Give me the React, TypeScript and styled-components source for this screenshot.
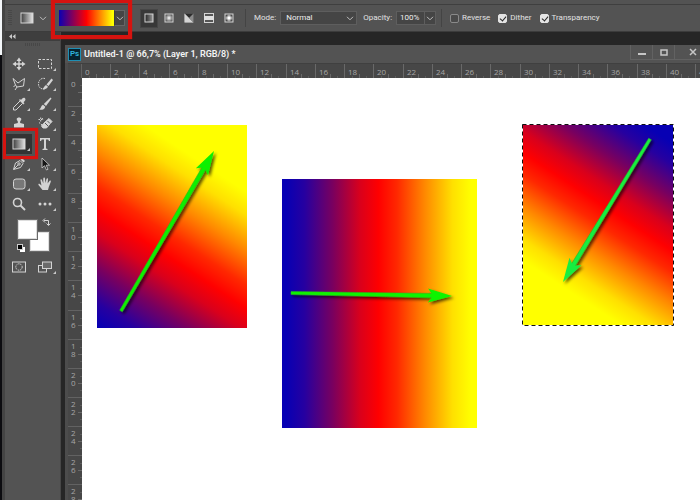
import React from "react";
import styled, { createGlobalStyle, css } from "styled-components";

const GlobalStyle = createGlobalStyle`
  * { box-sizing: border-box; }
  body { margin: 0; background: #262626; }
  button, input, select { font: inherit; color: inherit; margin: 0; padding: 0; border: 0; border-radius: 0; background: none; }
`;

const RAMP = "linear-gradient(90deg, #0a00b4 0%, #ff0000 50%, #ffff00 97%)";

const Shell = styled.div`
  display: flex;
  height: 100vh;
  overflow: hidden;
  color: #e2e2e2;
  font-family: Roboto, "Open Sans", sans-serif;
  font-size: 8px;
  line-height: 12px;
`;

const Backdrop = styled.div`
  flex: none;
  width: 2px;
  background: linear-gradient(#f4f7fa 0 55px, #0c0c10 55px);
`;

const Main = styled.div`
  flex: 1;
  min-width: 0;
  display: flex;
  flex-direction: column;
  border-left: 3px solid #444444;
`;

const MenuEdge = styled.div`
  flex: none;
  height: 5px;
  background: #535353;
  border-bottom: 1px solid #3f3f3f;
`;

const OptionsBar = styled.header`
  flex: none;
  display: flex;
  align-items: center;
  height: 27px;
  padding-left: 3px;
  background: #535353;
  border-bottom: 1px solid #3c3c3c;
`;

const Grip = styled.span`
  flex: none;
  width: 4px;
  height: 16px;
  background: repeating-linear-gradient(#484848 0 1px, #535353 1px 2px);
`;

const Divider = styled.span`
  flex: none;
  width: 1px;
  height: 18px;
  margin: 0 8px 0 5px;
  background: #444444;
`;

const PresetButton = styled.button`
  display: flex;
  align-items: center;
  gap: 5px;
  height: 18px;
  margin-left: 8px;
`;

const Highlighted = styled.div`
  position: relative;
  display: flex;
  align-items: center;
  height: 18px;
  margin: 0 15px 0 12px;

  &::after {
    content: "";
    position: absolute;
    inset: -10px -7px -12px -8px;
    border: 4px solid #d6130f;
    box-shadow: 0 0 1px #d6130f;
    pointer-events: none;
    z-index: 2;
  }
`;

const RampButton = styled.button`
  width: 55px;
  height: 16px;
  background: ${RAMP};
`;

const DropButton = styled.button`
  display: grid;
  place-items: center;
  width: 11px;
  height: 16px;
  border: 1px solid #666666;
  border-left: 1px solid #3c3c3c;
  background: #454545;
`;

const ModeButton = styled.button<{ $active?: boolean }>`
  flex: none;
  display: grid;
  place-items: center;
  width: 18px;
  height: 19px;
  margin-right: 2px;
  ${({ $active }) => $active && css`background: #383838; box-shadow: inset 0 0 0 1px #464646;`}
`;

const FieldLabel = styled.label`
  flex: none;
  margin-right: 4px;
`;

const Field = styled.div<{ $width: number; $after?: number }>`
  flex: none;
  position: relative;
  display: flex;
  align-items: center;
  width: ${({ $width }) => $width}px;
  height: 14px;
  margin-right: ${({ $after = 0 }) => $after}px;
  border: 1px solid #5e5e5e;
  background: #454545;
  color: #eeeeee;

  > svg { position: absolute; right: 2px; top: 4px; pointer-events: none; }
`;

const ModeSelect = styled.select`
  appearance: none;
  width: 100%;
  height: 12px;
  padding-left: 5px;
`;

const OpacityInput = styled.input`
  width: 27px;
  height: 12px;
  padding-left: 3px;
`;

const OpacityDrop = styled.button`
  display: grid;
  place-items: center;
  flex: 1;
  height: 12px;
  border-left: 1px solid #5e5e5e;
`;

const Check = styled.label`
  flex: none;
  display: flex;
  align-items: center;
  gap: 3px;
  margin-right: 8px;
`;

const Box = styled.input`
  appearance: none;
  position: relative;
  width: 9px;
  height: 9px;
  border: 1px solid #8a8a8a;
  border-radius: 2px;
  background: #4a4a4a;

  &:checked { background: #e4e4e4; border-color: #e4e4e4; }
  &:checked::before {
    content: "";
    position: absolute;
    left: 2px;
    top: 0;
    width: 3px;
    height: 5px;
    border: solid #262626;
    border-width: 0 1px 1px 0;
    transform: rotate(40deg);
  }
`;

const Workspace = styled.div`
  flex: 1;
  min-height: 0;
  display: flex;
  background: #262626;
`;

const ToolPanel = styled.aside`
  flex: none;
  width: 56px;
  background: #535353;
  border-right: 1px solid #474747;
`;

const PanelHeader = styled.button`
  display: flex;
  align-items: center;
  width: 100%;
  height: 9px;
  padding-left: 4px;
  background: #3e3e3e;
`;

const PanelGrip = styled.div`
  width: 15px;
  height: 3px;
  margin: 2px 0 8px 20px;
  background: repeating-linear-gradient(90deg, #474747 0 1px, #535353 1px 2px);
`;

const ToolGrid = styled.div`
  display: grid;
  grid-template-columns: repeat(2, 26px);
  grid-auto-rows: 20px;
  padding-left: 1px;
`;

const ToolButton = styled.button<{ $active?: boolean; $plain?: boolean }>`
  position: relative;
  display: grid;
  place-items: center;

  ${({ $plain }) => !$plain && css`
    &::after {
      content: "";
      position: absolute;
      right: 2px;
      bottom: 3px;
      border-left: 3px solid transparent;
      border-bottom: 3px solid #c8c8c8;
    }
  `}

  ${({ $active }) => $active && css`
    background: #333333;
    &::before {
      content: "";
      position: absolute;
      inset: -6px -6px -5px -3px;
      border: 3px solid #d6130f;
      box-shadow: 0 0 1px #d6130f;
      z-index: 2;
    }
  `}
`;

const Swatches = styled.div`
  position: relative;
  height: 43px;
`;

const Swatch = styled.button<{ $back?: boolean }>`
  position: absolute;
  left: ${({ $back }) => ($back ? 25 : 13)}px;
  top: ${({ $back }) => ($back ? 18 : 6)}px;
  width: 19px;
  height: 19px;
  background: #ffffff;
  border: 1px solid #dddddd;
  outline: 1px solid #6a6a6a;
`;

const SwatchAction = styled.button<{ $reset?: boolean }>`
  position: absolute;
  display: grid;
  left: ${({ $reset }) => ($reset ? 12 : 37)}px;
  top: ${({ $reset }) => ($reset ? 30 : 4)}px;
`;

const DocWindow = styled.main`
  flex: 1;
  min-width: 0;
  display: flex;
  flex-direction: column;
  margin: 13px 0 0 4px;
  padding-left: 3px;
  background: #4c4c4c;
`;

const TitleBar = styled.div`
  flex: none;
  display: flex;
  height: 18px;
  margin-left: -3px;
  padding-left: 3px;
  background: #535353;
`;

const DocTitle = styled.h1`
  flex: 1;
  display: flex;
  align-items: center;
  gap: 3px;
  margin: 0;
  font-family: Roboto, "Open Sans", sans-serif;
  font-size: 9px;
  line-height: 20px;
  font-weight: 600;
  color: #f4f4f4;
  white-space: nowrap;
`;

const AppBadge = styled.span`
  flex: none;
  display: grid;
  place-items: center;
  width: 13px;
  height: 13px;
  border: 1px solid #1f8fb4;
  background: #06222f;
  color: #2fb4dc;
  font-size: 8px;
  line-height: 10px;
`;

const WindowButton = styled.button<{ $last?: boolean }>`
  flex: none;
  display: grid;
  place-items: center;
  width: ${({ $last }) => ($last ? 26 : 22)}px;
  height: 15px;
  padding-left: ${({ $last }) => ($last ? 10 : 0)}px;
  border-left: 1px solid #626262;
  border-bottom: 1px solid #626262;
`;

const TopRuler = styled.div`
  flex: none;
  display: flex;
  height: 15px;
  overflow: hidden;
  background: #474747;
  color: #a6a6a6;
  font-family: "Open Sans", sans-serif;
  border-top: 1px solid #404040;
`;

const RulerCorner = styled.span`
  flex: none;
  width: 14px;
  border-right: 1px solid #626262;
`;

const TopCell = styled.span`
  flex: none;
  width: 29px;
  padding: 2px 0 0 3px;
  border-right: 1px solid #696969;
  background:
    linear-gradient(#696969, #696969) 14px 100% / 1px 4px no-repeat,
    linear-gradient(#5c5c5c, #5c5c5c) 7px 100% / 1px 2px no-repeat,
    linear-gradient(#5c5c5c, #5c5c5c) 21px 100% / 1px 2px no-repeat;
  &:nth-child(4n) { width: 30px; }
`;

const DocBody = styled.div`
  flex: 1;
  min-height: 0;
  display: flex;
`;

const SideRuler = styled.div`
  flex: none;
  width: 14px;
  overflow: hidden;
  background: #474747;
  color: #a6a6a6;
  font-family: "Open Sans", sans-serif;
`;

const SideCell = styled.div`
  height: 29px;
  width: 14px;
  padding: 2px 6px 0 3px;
  line-height: 8px;
  word-break: break-all;
  border-bottom: 1px solid #626262;
  background:
    linear-gradient(#696969, #696969) 100% 14px / 4px 1px no-repeat,
    linear-gradient(#5c5c5c, #5c5c5c) 100% 7px / 2px 1px no-repeat,
    linear-gradient(#5c5c5c, #5c5c5c) 100% 21px / 2px 1px no-repeat;
  &:nth-child(8n) { height: 30px; }
`;

const Canvas = styled.section`
  position: relative;
  flex: 1;
  min-width: 0;
  overflow: hidden;
  background: #ffffff;
`;

const Artboard = styled.svg<{ $x: number; $y: number }>`
  position: absolute;
  left: ${({ $x }) => $x}px;
  top: ${({ $y }) => $y}px;
  overflow: visible;
`;

const Chevron = () => (
  <svg width="8" height="5" viewBox="0 0 8 5" fill="none" stroke="#bdbdbd"><path d="M1 .8 4 3.8 7 .8" /></svg>
);

const light = "#d4d4d4";

const GradientIcon = ({ id }: { id: string }) => (
  <svg width="14" height="12" viewBox="0 0 14 12">
    <defs><linearGradient id={id}><stop stopColor="#3d3d3d" /><stop offset="1" stopColor="#e6e6e6" /></linearGradient></defs>
    <rect x="1" y="1" width="12" height="10" fill={`url(#${id})`} stroke={light} />
  </svg>
);

const modeIcons: { name: string; art: React.ReactNode }[] = [
  { name: "Linear gradient", art: <rect x="1" y="1" width="8" height="8" fill="url(#mLin)" stroke={light} /> },
  { name: "Radial gradient", art: <rect x="1" y="1" width="8" height="8" fill="url(#mRad)" stroke={light} /> },
  { name: "Angle gradient", art: <g><rect x=".5" y=".5" width="9" height="9" fill="#8a8a8a" /><path d="M.5.5H9.5V9.5z" fill="#2c2c2c" /><path d="M5 5 .5.5V9.5H9.5z" fill={light} /><path d="M5 5 9.5.5V9.5z" fill="#8a8a8a" /></g> },
  { name: "Reflected gradient", art: <g><rect x=".5" y=".5" width="9" height="9" fill="#555" stroke={light} /><rect x="0" y="3" width="10" height="4" fill="#dedede" /></g> },
  { name: "Diamond gradient", art: <g><rect x="1" y="1" width="8" height="8" fill="#4b4b4b" stroke={light} /><path d="M5 1 9 5 5 9 1 5z" fill="#a8a8a8" /><path d="M5 3 7 5 5 7 3 5z" fill="#fff" /></g> },
];

interface Tool { name: string; art: React.ReactNode; plain?: boolean; active?: boolean }

const tools: Tool[] = [
  { name: "Move", plain: true, art: <path fill={light} stroke="none" d="M8 1.5 10.5 5H8.7V7.3H11V5.5L14.5 8 11 10.5V8.7H8.7V11H10.5L8 14.5 5.5 11H7.3V8.7H5V10.5L1.5 8 5 5.5V7.3H7.3V5H5.5z" /> },
  { name: "Marquee", art: <rect x="1.5" y="3.5" width="13" height="9" strokeDasharray="2.5 1.5" /> },
  { name: "Polygonal lasso", art: <path d="M2 2.5 7 7 13.5 2.5 12.5 10 6 11 4.5 9z M6 11 4 14M4.5 9 2.5 11" /> },
  { name: "Quick selection", art: <g><path d="M8 2.5C4 1.5 1.5 4.5 1.5 8S4 13.5 8 13" strokeDasharray="1.5 1" /><path d="M14.5 2.5 16 4 11.5 10 9.5 8.5z" fill={light} stroke="none" /><path d="M9 9 11 10.8C10 13 8 13.5 5.5 13 7 12 7 10 9 9z" fill={light} stroke="none" /></g> },
  { name: "Eyedropper", art: <g><path d="m9 5-6.5 6.5V14H5l6.5-6.5" /><path d="M8 4 9 3 10 4C11 2.5 12.5 1 14 2.2 15.2 3.5 14 5 12.5 6.2L13.5 7.2 12.3 8.4z" fill={light} stroke="none" /></g> },
  { name: "Brush", art: <g fill={light} stroke="none"><path d="M13.5 1.5 14.5 2.5 9 10 6.8 8z" /><path d="M6 8.7 8.3 10.7C7.5 13.5 5 14.2 2 13.7 4.2 12.5 3.7 9.8 6 8.7z" /></g> },
  { name: "Clone stamp", art: <g fill={light} stroke="none"><path d="M6.8 7C7.5 5 5.5 4.5 5.7 3 6 1 10 1 10.3 3 10.5 4.5 8.5 5 9.2 7L13 8V11.5H3V8z" /><path d="M3 12.7H13V14H3z" /></g> },
  { name: "Eraser", art: <g><path d="M6.5 7.5 12 2.5 15 5.5 9.5 12H6L4.5 10z" fill={light} /><path d="M8 7 11 10M10.5 5 13 7.5" stroke="#555" /><path d="M1.5 3.5H6M3.7 1.5V6M2 6.5 5 9M5 2 6.5 4" strokeDasharray="1.5 1" /></g> },
  { name: "Gradient", active: true, art: <GradientIcon id="toolGradient" /> },
  { name: "Type", art: <path d="M3 2H13V5H12L11.2 3.5H9V12.5L10.5 13V14H5.5V13L7 12.5V3.5H4.8L4 5H3z" fill={light} stroke="none" /> },
  { name: "Pen", art: <g><path d="M2.5 13.5 4.5 7 9 4.5 12 7.5 9.5 11.5z" /><path d="m3 13 4.2-4.2" /><circle cx="8" cy="8" r="1.2" /><path d="M9.5 3.5 11 2 14 5 12.5 6.5z" fill={light} stroke="none" /></g> },
  { name: "Direct selection", art: <path d="M5 2V12L7.5 9.7 9.5 14 11 13.3 9.2 9.2H12.5z" fill="#161616" stroke={light} strokeWidth=".8" /> },
  { name: "Rounded rectangle", art: <rect x="2.5" y="3" width="11.5" height="10" rx="2.5" fill="#777" /> },
  { name: "Hand", art: <path d="M5.5 14 1.5 9C1 7.8 2.2 7.5 3 8.3L4.5 9.5 3.5 4.5C3.3 3 4.7 3 5 4L6.3 7.5 6.3 2.5C6.4 1 7.9 1 8 2.5L8.4 7 9.5 3C9.9 1.7 11.2 2 11 3.3L10.6 7.5 12.4 5C13.3 4 14.3 4.7 13.7 5.9L11.8 11 11 14z" fill={light} stroke="none" /> },
  { name: "Zoom", plain: true, art: <g><circle cx="6.5" cy="6.5" r="4" strokeWidth="1.6" /><path d="M9.5 9.5 14 14" strokeWidth="2" /></g> },
  { name: "Edit toolbar", art: <g fill={light} stroke="none"><circle cx="3" cy="8" r="1.5" /><circle cx="8" cy="8" r="1.5" /><circle cx="13" cy="8" r="1.5" /></g> },
];

const screenTools: Tool[] = [
  { name: "Quick mask", plain: true, art: <g><rect x="1.5" y="3" width="13" height="10" /><circle cx="8" cy="8" r="3.2" strokeDasharray="1.5 .8" /></g> },
  { name: "Screen mode", art: <g><rect x="1.5" y="6.5" width="8" height="6.5" /><rect x="5.5" y="3" width="9" height="6.5" fill="#6a6a6a" /></g> },
];

const ToolSet = ({ items }: { items: Tool[] }) => (
  <ToolGrid>
    {items.map((t) => (
      <ToolButton key={t.name} type="button" aria-label={t.name} $active={t.active} $plain={t.plain}>
        {t.active ? t.art : <svg width="16" height="16" viewBox="0 0 16 16" fill="none" stroke={light}>{t.art}</svg>}
      </ToolButton>
    ))}
  </ToolGrid>
);

type Point = [number, number];
interface PaintedProps {
  id: string; x: number; y: number; w: number; h: number;
  ramp: [Point, Point]; tail: Point; tip: Point; color: string; selected?: boolean;
}

const Painted = ({ id, x, y, w, h, ramp, tail, tip, color, selected }: PaintedProps) => {
  const dx = tip[0] - tail[0];
  const dy = tip[1] - tail[1];
  const length = Math.hypot(dx, dy);
  const angle = (Math.atan2(dy, dx) * 180) / Math.PI;
  return (
    <Artboard $x={x} $y={y} width={w} height={h} viewBox={`0 0 ${w} ${h}`} role="img" aria-label={`Gradient ${id}`}>
      <defs>
        <linearGradient id={`ramp-${id}`} gradientUnits="userSpaceOnUse" x1={ramp[0][0]} y1={ramp[0][1]} x2={ramp[1][0]} y2={ramp[1][1]}>
          <stop offset="0" stopColor="#0700b4" />
          <stop offset=".1" stopColor="#2600a0" />
          <stop offset=".25" stopColor="#780060" />
          <stop offset=".4" stopColor="#d9001c" />
          <stop offset=".5" stopColor="#ff0000" />
          <stop offset=".6" stopColor="#ff2800" />
          <stop offset=".75" stopColor="#ff8800" />
          <stop offset=".9" stopColor="#ffe000" />
          <stop offset="1" stopColor="#ffff00" />
        </linearGradient>
        <filter id={`shade-${id}`} filterUnits="userSpaceOnUse" x="-10" y="-10" width={w + 20} height={h + 20}>
          <feDropShadow dx="2" dy="2" stdDeviation="1.8" floodColor="#000" floodOpacity=".65" />
        </filter>
      </defs>
      <rect width={w} height={h} fill={`url(#ramp-${id})`} />
      {selected && (
        <g fill="none">
          <rect x=".5" y=".5" width={w - 1} height={h - 1} stroke="#fff" />
          <rect x=".5" y=".5" width={w - 1} height={h - 1} stroke="#111" strokeDasharray="4 3" />
        </g>
      )}
      <g filter={`url(#shade-${id})`}>
        <g transform={`translate(${tip[0]} ${tip[1]}) rotate(${angle})`}>
          <path d={`M${-length} -1.5 L-18 -2.2 V2.2 L${-length} 1.5z`} fill={color} stroke="#27b51f" strokeWidth=".5" />
          <path d="M0 0 -24 -7 -19 0 -24 7z" fill={color} />
        </g>
      </g>
    </Artboard>
  );
};

const TOP_MARKS = Array.from({ length: 22 }, (_, i) => i * 2);
const SIDE_MARKS = Array.from({ length: 15 }, (_, i) => i * 2);

export default function App() {
  return (
    <Shell>
      <GlobalStyle />
      <Backdrop />
      <Main>
        <MenuEdge />
        <OptionsBar>
          <Grip />
          <PresetButton type="button" aria-label="Tool preset"><GradientIcon id="presetGradient" /><Chevron /></PresetButton>
          <Highlighted>
            <RampButton type="button" aria-label="Edit gradient" />
            <DropButton type="button" aria-label="Gradient picker"><Chevron /></DropButton>
          </Highlighted>
          <svg width="0" height="0" aria-hidden="true">
            <defs>
              <linearGradient id="mLin"><stop stopColor="#222" /><stop offset="1" stopColor="#999" /></linearGradient>
              <radialGradient id="mRad"><stop stopColor="#fff" /><stop offset="1" stopColor="#555" /></radialGradient>
            </defs>
          </svg>
          {modeIcons.map((m, i) => (
            <ModeButton key={m.name} type="button" aria-label={m.name} $active={i === 0}>
              <svg width="10" height="10" viewBox="0 0 10 10">{m.art}</svg>
            </ModeButton>
          ))}
          <Divider />
          <FieldLabel htmlFor="mode">Mode:</FieldLabel>
          <Field $width={77} $after={6}>
            <ModeSelect id="mode" defaultValue="Normal"><option>Normal</option></ModeSelect>
            <Chevron />
          </Field>
          <FieldLabel htmlFor="opacity">Opacity:</FieldLabel>
          <Field $width={40}>
            <OpacityInput id="opacity" defaultValue="100%" />
            <OpacityDrop type="button" aria-label="Opacity slider"><Chevron /></OpacityDrop>
          </Field>
          <Divider />
          <Check><Box type="checkbox" />Reverse</Check>
          <Check><Box type="checkbox" defaultChecked />Dither</Check>
          <Check><Box type="checkbox" defaultChecked />Transparency</Check>
        </OptionsBar>
        <Workspace>
          <ToolPanel>
            <PanelHeader type="button" aria-label="Collapse tools">
              <svg width="7" height="5" viewBox="0 0 7 5" fill="#c8c8c8"><path d="M3 0V5L0 2.5zM6.5 0V5L3.5 2.5z" /></svg>
            </PanelHeader>
            <PanelGrip />
            <ToolSet items={tools} />
            <Swatches>
              <Swatch $back type="button" aria-label="Background colour" />
              <Swatch type="button" aria-label="Foreground colour" />
              <SwatchAction type="button" aria-label="Swap colours">
                <svg width="9" height="9" viewBox="0 0 9 9" fill="none" stroke={light}><path d="M2 2.5H6.5V7M3 .5 1 2.5 3 4.5M4.5 5.5 6.5 7.5 8.5 5.5" /></svg>
              </SwatchAction>
              <SwatchAction $reset type="button" aria-label="Default colours">
                <svg width="9" height="9" viewBox="0 0 9 9"><rect x="3" y="3" width="5" height="5" fill="#fff" /><rect x=".5" y=".5" width="5" height="5" fill="#000" stroke="#ccc" /></svg>
              </SwatchAction>
            </Swatches>
            <ToolSet items={screenTools} />
          </ToolPanel>
          <DocWindow>
            <TitleBar>
              <DocTitle><AppBadge>Ps</AppBadge>Untitled-1 @ 66,7% (Layer 1, RGB/8) *</DocTitle>
              <WindowButton type="button" aria-label="Minimize"><svg width="8" height="8"><rect y="5" width="8" height="2" fill="#c6c6c6" /></svg></WindowButton>
              <WindowButton type="button" aria-label="Maximize"><svg width="8" height="8"><rect x="1" y="2" width="6" height="5" fill="none" stroke="#c6c6c6" strokeWidth="1.5" /></svg></WindowButton>
              <WindowButton $last type="button" aria-label="Close"><svg width="8" height="8"><path d="M1 1 7 7M7 1 1 7" stroke="#c6c6c6" strokeWidth="1.5" /></svg></WindowButton>
            </TitleBar>
            <TopRuler>
              <RulerCorner />
              {TOP_MARKS.map((n) => <TopCell key={n}>{n}</TopCell>)}
            </TopRuler>
            <DocBody>
              <SideRuler>{SIDE_MARKS.map((n) => <SideCell key={n}>{n}</SideCell>)}</SideRuler>
              <Canvas>
                <Painted id="diagonal" x={15} y={47} w={150} h={203} ramp={[[0, 201], [107, 39]]} tail={[24, 186]} tip={[117, 26]} color="#10f000" />
                <Painted id="horizontal" x={200} y={101} w={195} h={249} ramp={[[4, 0], [189, 0]]} tail={[9, 114]} tip={[170, 117]} color="#10f400" />
                <Painted id="reversed" x={440} y={46} w={152} h={202} ramp={[[126, 3], [27, 154]]} tail={[128, 15]} tip={[41, 158]} color="#18ee40" selected />
              </Canvas>
            </DocBody>
          </DocWindow>
        </Workspace>
      </Main>
    </Shell>
  );
}
